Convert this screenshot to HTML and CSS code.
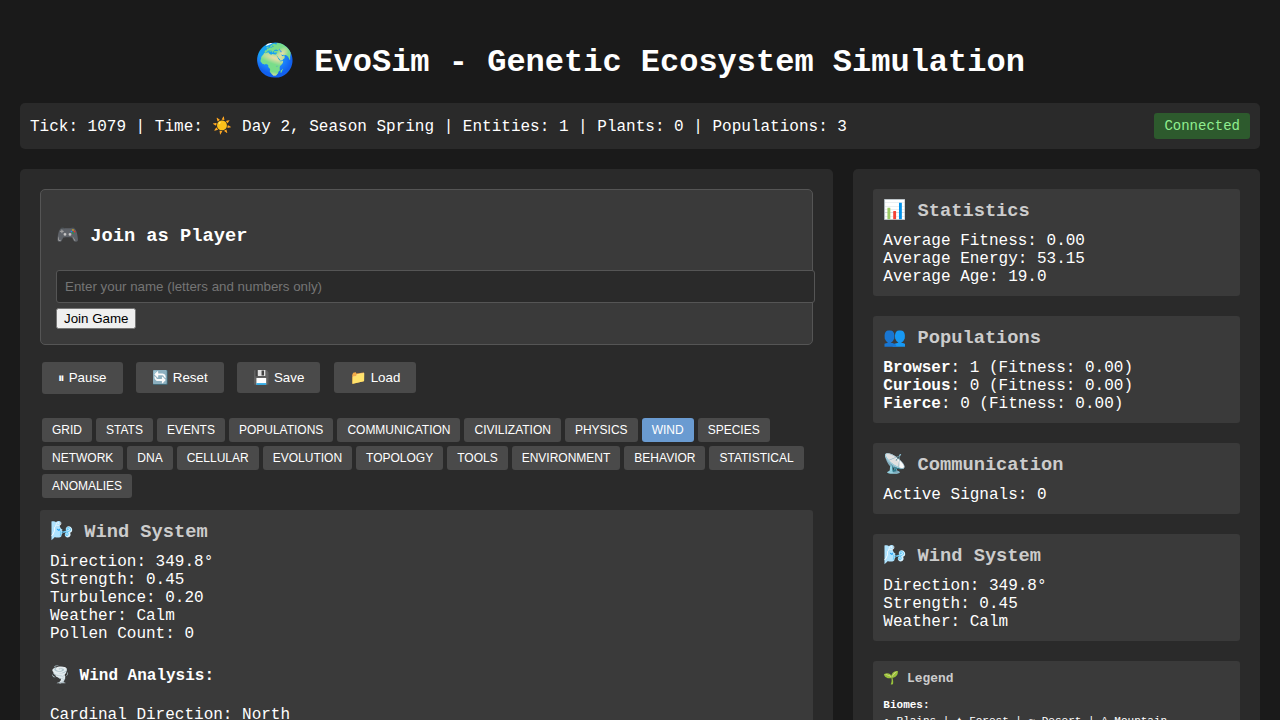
FILE: index.html
```html
<!DOCTYPE html>
<html lang="en">
<head>
<meta charset="utf-8">
<title>EvoSim - Genetic Ecosystem Simulation</title>
<link rel="stylesheet" href="styles.css">
</head>
<body>
<div class="container">
  <header class="header">
    <h1>🌍 EvoSim - Genetic Ecosystem Simulation</h1>
  </header>
  <div class="status-bar">
    <div>Tick: 1079 | Time: ☀️ Day 2, Season Spring | Entities: 1 | Plants: 0 | Populations: 3</div>
    <div class="connection">Connected</div>
  </div>
  <main class="main">
    <div class="panel">
      <section class="join">
        <h3>🎮 Join as Player</h3>
        <input class="name-input" type="text" aria-label="Player name" placeholder="Enter your name (letters and numbers only)">
        <button class="join-button" type="button">Join Game</button>
      </section>
      <div class="controls">
        <button type="button">⏸ Pause</button>
        <button type="button">🔄 Reset</button>
        <button type="button">💾 Save</button>
        <button type="button">📁 Load</button>
      </div>
      <nav class="tabs">
        <button type="button">GRID</button>
        <button type="button">STATS</button>
        <button type="button">EVENTS</button>
        <button type="button">POPULATIONS</button>
        <button type="button">COMMUNICATION</button>
        <button type="button">CIVILIZATION</button>
        <button type="button">PHYSICS</button>
        <button type="button" class="active">WIND</button>
        <button type="button">SPECIES</button>
        <button type="button">NETWORK</button>
        <button type="button">DNA</button>
        <button type="button">CELLULAR</button>
        <button type="button">EVOLUTION</button>
        <button type="button">TOPOLOGY</button>
        <button type="button">TOOLS</button>
        <button type="button">ENVIRONMENT</button>
        <button type="button">BEHAVIOR</button>
        <button type="button">STATISTICAL</button>
        <button type="button">ANOMALIES</button>
      </nav>
      <section class="card">
        <h3>🌬️ Wind System</h3>
        <div>Direction: 349.8°</div>
        <div>Strength: 0.45</div>
        <div>Turbulence: 0.20</div>
        <div>Weather: Calm</div>
        <div>Pollen Count: 0</div>
        <h4>🌪️ Wind Analysis:</h4>
        <div>Cardinal Direction: North</div>
      </section>
    </div>
    <aside class="panel">
      <section class="card">
        <h3>📊 Statistics</h3>
        <div>Average Fitness: 0.00</div>
        <div>Average Energy: 53.15</div>
        <div>Average Age: 19.0</div>
      </section>
      <section class="card">
        <h3>👥 Populations</h3>
        <div><strong>Browser</strong>: 1 (Fitness: 0.00)</div>
        <div><strong>Curious</strong>: 0 (Fitness: 0.00)</div>
        <div><strong>Fierce</strong>: 0 (Fitness: 0.00)</div>
      </section>
      <section class="card">
        <h3>📡 Communication</h3>
        <div>Active Signals: 0</div>
      </section>
      <section class="card">
        <h3>🌬️ Wind System</h3>
        <div>Direction: 349.8°</div>
        <div>Strength: 0.45</div>
        <div>Weather: Calm</div>
      </section>
      <section class="card legend">
        <h3>🌱 Legend</h3>
        <div><strong>Biomes:</strong></div>
        <div>• Plains | ♠ Forest | ~ Desert | ^ Mountain</div>
      </section>
    </aside>
  </main>
</div>
</body>
</html>
```

FILE: styles.css
```css
body {
  margin: 0;
  padding: 20px;
  background: #1a1a1a;
  color: #fff;
  font-family: "Liberation Mono", monospace;
}
.container {
  max-width: 1400px;
  margin: 0 auto;
}
.header {
  text-align: center;
}
.header h1 {
  margin: 0;
  padding: 21px 0 22px;
  font-size: 32px;
}
.status-bar {
  display: flex;
  justify-content: space-between;
  align-items: center;
  padding: 10px;
  margin-bottom: 20px;
  background: #2a2a2a;
  border-radius: 5px;
}
.connection {
  padding: 5px 10px;
  border-radius: 3px;
  background: #2d5a2d;
  color: #90ee90;
  font-size: 14px;
}
.main {
  display: grid;
  grid-template-columns: 2fr 1fr;
  gap: 20px;
}
.panel {
  min-width: 0;
  padding: 20px;
  background: #2a2a2a;
  border-radius: 5px;
}
.join {
  padding: 15px;
  margin-bottom: 15px;
  background: #3a3a3a;
  border: 1px solid #555;
  border-radius: 5px;
}
.name-input {
  width: 100%;
  padding: 8px;
  margin: 5px 0;
  background: #2a2a2a;
  border: 1px solid #555;
  border-radius: 3px;
  color: #fff;
}
.join-button {
  display: block;
}
.controls {
  margin-bottom: 20px;
}
.controls button,
.tabs button {
  margin: 2px;
  border: none;
  border-radius: 3px;
  background: #4a4a4a;
  color: #fff;
  cursor: pointer;
}
.controls button {
  padding: 8px 16px;
}
.tabs {
  display: flex;
  flex-wrap: wrap;
  margin-bottom: 10px;
}
.tabs button {
  padding: 5px 10px;
  font-size: 12px;
}
.tabs .active {
  background: #6a9bd1;
}
.card {
  padding: 10px;
  margin-bottom: 20px;
  background: #3a3a3a;
  border-radius: 3px;
}
.card h3 {
  margin: 0 0 10px;
  color: #ccc;
}
.legend {
  font-size: 11px;
  line-height: 16px;
}
```
